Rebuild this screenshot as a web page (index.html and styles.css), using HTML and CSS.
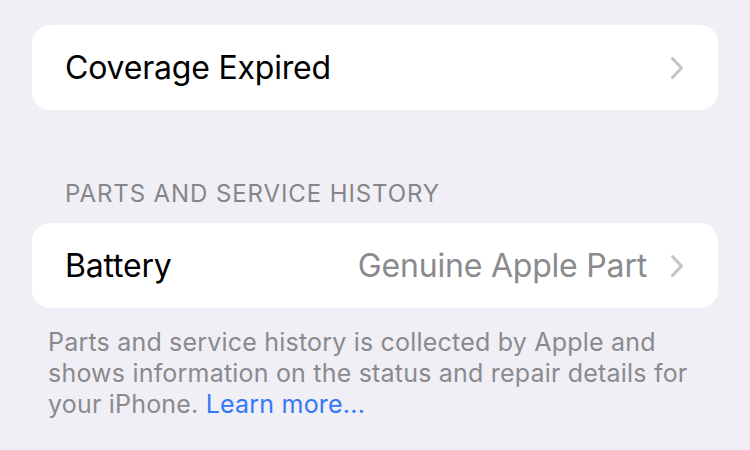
FILE: index.html
```html
<!DOCTYPE html>
<html lang="en">
<head>
    <meta charset="UTF-8">
    <title>Parts and Service History</title>
    <link rel="stylesheet" href="styles.css">
</head>
<body>

<div class="group">
    <div class="row">
        <span class="label">Coverage Expired</span>
        <svg class="chevron" viewBox="0 0 14 24" width="14" height="24"><path d="M2.5 2.5 L11.5 12 L2.5 21.5" fill="none" stroke="#c4c4c7" stroke-width="3" stroke-linecap="round" stroke-linejoin="round"/></svg>
    </div>
</div>

<h2 class="section-title">PARTS AND SERVICE HISTORY</h2>

<div class="group">
    <div class="row">
        <span class="label">Battery</span>
        <span class="value">Genuine Apple Part</span>
        <svg class="chevron" viewBox="0 0 14 24" width="14" height="24"><path d="M2.5 2.5 L11.5 12 L2.5 21.5" fill="none" stroke="#c4c4c7" stroke-width="3" stroke-linecap="round" stroke-linejoin="round"/></svg>
    </div>
</div>

<p class="footer">Parts and service history is collected by Apple and<br>shows information on the status and repair details for<br>your iPhone. <a href="#">Learn more...</a></p>

</body>
</html>
```

FILE: styles.css
```css
body {
    font-family: 'Inter', 'Roboto', sans-serif;
    background-color: #f0eff5;
    color: #000;
    margin: 0;
    padding: 25px 32px 0 32px;
}

.group {
    background: #fff;
    border-radius: 18px;
}

.row {
    display: flex;
    align-items: center;
    height: 85px;
    padding: 0 34px 0 33px;
}

.label {
    font-size: 32px;
    letter-spacing: -0.2px;
    flex: 1;
}

.value {
    font-size: 32px;
    letter-spacing: -0.2px;
    color: #8a8a8e;
    margin-right: 23px;
}

.chevron {
    display: block;
}

.section-title {
    font-size: 24px;
    line-height: 29px;
    font-weight: 400;
    color: #86868a;
    margin: 0;
    padding: 69px 33px 15px 33px;
    letter-spacing: 0.9px;
}

.footer {
    font-size: 25px;
    line-height: 31px;
    letter-spacing: 0.2px;
    color: #8a8a8e;
    margin: 0;
    padding: 19px 16px 0 16px;
}

.footer a {
    color: #3478f6;
    text-decoration: none;
}
```
